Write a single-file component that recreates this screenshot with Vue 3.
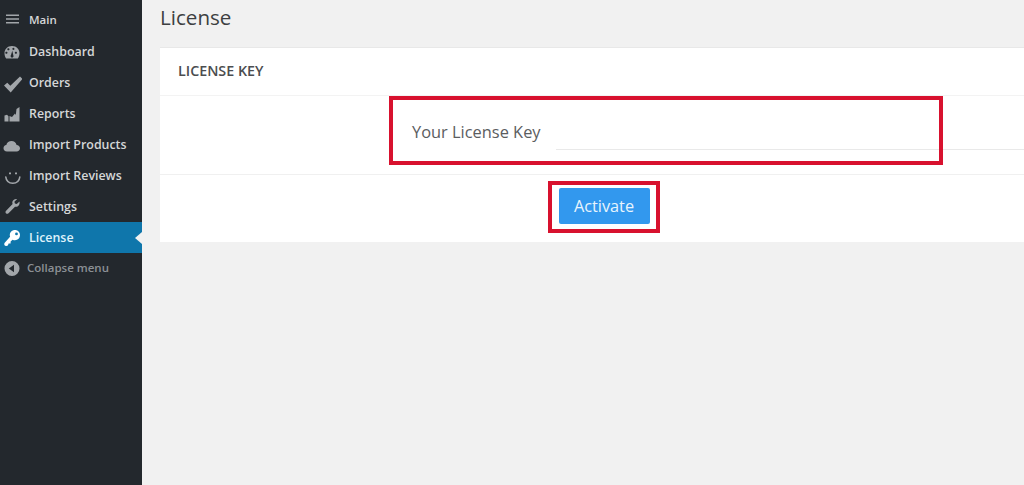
<template>
  <div class="page">
    <aside class="sidebar">
      <div
        v-for="item in menu"
        :key="item.label"
        class="menu-item"
        :class="{ active: item.label == 'License', muted: item.label == 'Collapse menu', head: item.label == 'Main' }"
      >
        <svg class="icon" viewBox="0 0 20 20" width="20" height="20">
          <path :d="item.icon" fill="currentColor" :fill-rule="item.evenodd ? 'evenodd' : 'nonzero'" />
          <path v-if="item.stroke" :d="item.stroke" fill="none" stroke="currentColor" stroke-width="1.6" stroke-linecap="round" />
        </svg>
        <span>{{ item.label }}</span>
      </div>
    </aside>

    <main class="content">
      <h1 class="title">License</h1>
      <section class="card">
        <div class="card-head">LICENSE KEY</div>
        <div class="form-row">
          <label class="field-label">Your License Key</label>
          <div class="field-line"></div>
          <div class="mark mark-field"></div>
        </div>
        <div class="card-foot">
          <button class="activate">Activate</button>
          <div class="mark mark-button"></div>
        </div>
      </section>
    </main>
  </div>
</template>

<script setup>
const menu = [
  { label: "Main", icon: "M4 5.500h13v1.600H4zM4 9.200h13v1.600H4zM4 12.900h13v1.600H4z" },
  {
    label: "Dashboard",
    evenodd: true,
    icon: "M10 4C5.300 4 2.500 7.500 2.500 11.200c0 2.200.7 4.200 1.700 5.300h11.600c1-1.100 1.700-3.100 1.700-5.300C17.500 7.500 14.700 4 10 4zM5.500 10.700a1.100 1.100 0 1 0 0 .1zM7.500 7.200a1.100 1.100 0 1 0 0 .1zM12.500 6.800a1.100 1.100 0 1 0 0 .1zM15 10.700a1.100 1.100 0 1 0 0 .1zM9 13l1.300-4.200 1 4.400a1.500 1.500 0 1 1-2.300-.2z",
  },
  { label: "Orders", icon: "M2 12.500l3.300-2.800 3 3L18 3.500l2.500 2.500-11.800 13.500z" },
  { label: "Reports", icon: "M2.500 17.500v-6l2.500-.8 1.500 1.500v5.300zM7.500 17.500V12l2.500 1 3-3.500.8 1.500.7-6 3-2v14.500z" },
  { label: "Import Products", icon: "M5 16.500C2.800 16.500 1.500 15 1.500 13.200c0-1.700 1.200-3 2.800-3.200C4.800 7.500 7.100 6 9.500 6c2.500 0 4.500 1.600 5.100 4 1.800.1 3.400 1.400 3.400 3.300 0 1.800-1.500 3.200-3.300 3.200z" },
  {
    label: "Import Reviews",
    icon: "M7 6.500h2v1.800H7zM13 6.500h2v1.800h-2z",
    stroke: "M3.800 11c.5 4.200 3.500 6.200 7 6.200s6.500-2 7-6.200",
  },
  { label: "Settings", icon: "M17.500 4.500l-2.800 2.600-1.800-.5-.5-1.800L15.200 2C12.800 1.500 10.500 3 10.300 5.300c0 .7.100 1.200.3 1.700l-6.500 6.700c-1.700 1.800.6 4.200 2.400 2.500L13 9.700c2.700.8 5.200-1.800 4.500-5.200z" },
  {
    label: "License",
    evenodd: true,
    icon: "M13 2c-3 0-5.200 2.200-5.200 5 0 .6.100 1.200.3 1.700L2.500 15c-.6 1-.2 3 1.800 3 .8 0 1.300-.4 1.700-.8l.6-1.700h2v-2l2-1.800c.7.400 1.500.6 2.400.6 2.900 0 5-2.300 5-5.200C18 4.200 15.800 2 13 2zM14.500 4.500a1.400 1.400 0 1 0 0 2.800 1.400 1.400 0 0 0 0-2.800z",
  },
  {
    label: "Collapse menu",
    evenodd: true,
    icon: "M10 3a7.500 7.500 0 1 0 0 15 7.500 7.500 0 0 0 0-15zM12 6.800v7.400L6.800 10.500z",
  },
];
</script>

<style>
html,
body {
  margin: 0;
  background: #f1f1f1;
}
</style>

<style scoped>
.page {
  display: flex;
  width: 1024px;
  height: 485px;
  overflow: hidden;
  background: #f1f1f1;
  font-family: "Open Sans", sans-serif;
}

.sidebar {
  width: 142px;
  flex-shrink: 0;
  padding-top: 4px;
  box-sizing: border-box;
  background: #23282d;
  color: #d5d7d8;
}

.menu-item {
  position: relative;
  box-sizing: border-box;
  display: flex;
  align-items: center;
  gap: 7px;
  height: 31px;
  padding-left: 2px;
  font-size: 12.400px;
  font-weight: 600;
  white-space: nowrap;
}

.menu-item .icon {
  flex-shrink: 0;
  color: #a2a6aa;
}

.menu-item.head {
  height: 32px;
  padding-bottom: 2px;
  font-size: 11.500px;
}

.menu-item.active {
  background: #0f76ab;
  color: #dff2fb;
}

.menu-item.active .icon {
  color: #fff;
}

.menu-item.active::after {
  content: "";
  position: absolute;
  right: 0;
  top: 10px;
  border: 6px solid transparent;
  border-left: 0;
  border-right: 7px solid #f1f1f1;
}

.menu-item.muted {
  gap: 5px;
  padding-bottom: 2px;
  color: #8b9095;
  font-size: 11.500px;
}

.content {
  flex: 1;
  padding-left: 18px;
  min-width: 0;
}

.title {
  margin: 0;
  height: 47px;
  color: #3d3f41;
  font-size: 20.600px;
  font-weight: 400;
  line-height: 35px;
}

.card {
  background: #fff;
  border-top: 1px solid #e8e8e8;
}

.card-head {
  height: 47px;
  padding-left: 18px;
  border-bottom: 1px solid #f3f3f3;
  color: #4b4d4f;
  font-size: 14.300px;
  font-weight: 600;
  line-height: 45px;
}

.form-row {
  position: relative;
  display: flex;
  align-items: center;
  height: 78px;
  padding-left: 252px;
  border-bottom: 1px solid #f0f0f0;
}

.field-label {
  position: relative;
  top: -4px;
  width: 144px;
  flex-shrink: 0;
  color: #5b5d5f;
  font-size: 16.400px;
}

.field-line {
  flex: 1;
  align-self: flex-end;
  height: 24px;
  margin-bottom: 24px;
  border-bottom: 1px solid #e9e9e9;
}

.card-foot {
  position: relative;
  display: flex;
  justify-content: center;
  align-items: flex-start;
  height: 67px;
  padding-left: 24px;
  padding-top: 13px;
  box-sizing: border-box;
}

.activate {
  width: 91px;
  height: 36px;
  border: 0;
  border-radius: 2px;
  background: #3298ee;
  color: #e8f4fd;
  font-family: inherit;
  font-size: 16.300px;
  font-weight: 500;
}

.mark {
  position: absolute;
  box-sizing: border-box;
  border: 4px solid #d8112e;
  pointer-events: none;
}

.mark-field {
  left: 229px;
  top: 0;
  width: 554px;
  height: 69px;
}

.mark-button {
  left: 388px;
  top: 6px;
  width: 112px;
  height: 52px;
}
</style>
